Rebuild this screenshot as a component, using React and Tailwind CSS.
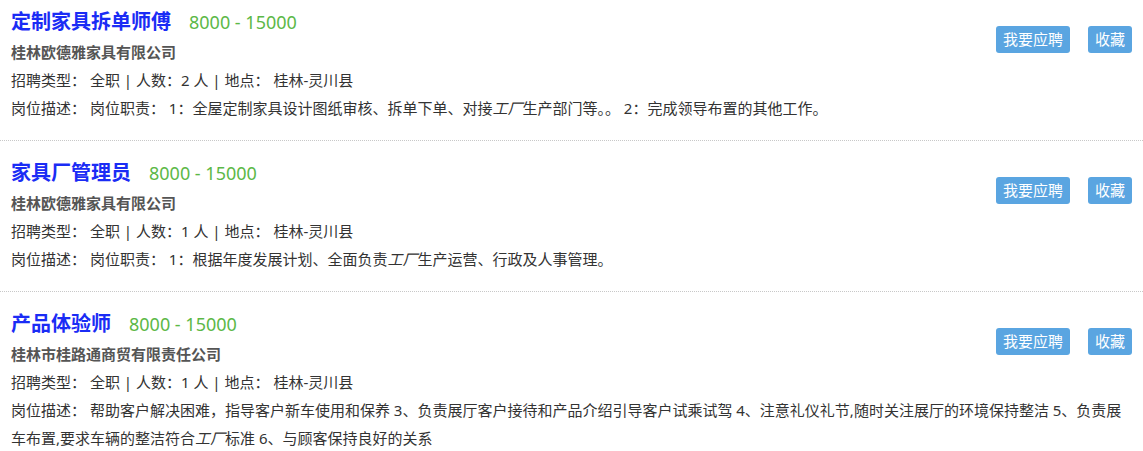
const jobs = [
  {
    title: '定制家具拆单师傅',
    salary: '8000 - 15000',
    company: '桂林欧德雅家具有限公司',
    type: '全职',
    count: 2,
    place: '桂林-灵川县',
    desc: ['岗位职责： 1：全屋定制家具设计图纸审核、拆单下单、对接', '生产部门等。。 2：完成领导布置的其他工作。'],
  },
  {
    title: '家具厂管理员',
    salary: '8000 - 15000',
    company: '桂林欧德雅家具有限公司',
    type: '全职',
    count: 1,
    place: '桂林-灵川县',
    desc: ['岗位职责： 1：根据年度发展计划、全面负责', '生产运营、行政及人事管理。'],
  },
  {
    title: '产品体验师',
    salary: '8000 - 15000',
    company: '桂林市桂路通商贸有限责任公司',
    type: '全职',
    count: 1,
    place: '桂林-灵川县',
    desc: [
      '帮助客户解决困难，指导客户新车使用和保养 3、负责展厅客户接待和产品介绍引导客户试乘试驾 4、注意礼仪礼节,随时关注展厅的环境保持整洁 5、负责展车布置,要求车辆的整洁符合',
      '标准 6、与顾客保持良好的关系',
    ],
  },
]

function JobItem({ job }) {
  return (
    <div className="px-[11px] pt-[16px] first:pt-[6px] pb-[18px] border-b border-dotted border-[#c8c8c8]">
      <div className="float-right mt-[20px] flex gap-[18px]">
        <button className="h-[27px] px-[7px] rounded-[3px] bg-[#5aa5e1] text-white text-[15px] leading-[27px]">
          我要应聘
        </button>
        <button className="h-[27px] px-[7px] rounded-[3px] bg-[#5aa5e1] text-white text-[15px] leading-[27px]">
          收藏
        </button>
      </div>
      <div className="h-[32px] flex items-center">
        <span className="text-[20px] font-bold text-[#1a2cf5]">{job.title}</span>
        <span className="ml-[18px] text-[18px] text-[#5cb847]">{job.salary}</span>
      </div>
      <div className="h-[28px] leading-[28px] text-[15px] font-bold text-[#555]">{job.company}</div>
      <div className="h-[28px] leading-[28px] text-[15px] text-[#333]">
        招聘类型： 全职 | 人数：{job.count} 人 | 地点： {job.place}
      </div>
      <div className="leading-[28px] text-[15px] text-[#333]">
        岗位描述： {job.desc[0]}
        <i>工厂</i>
        {job.desc[1]}
      </div>
    </div>
  )
}

export default function App() {
  return (
    <div
      className="w-[1143px] h-[451px] overflow-hidden bg-white"
      style={{ fontFamily: '"Noto Sans", "Noto Sans CJK SC", sans-serif' }}
    >
      {jobs.map((job) => (
        <JobItem key={job.title} job={job} />
      ))}
    </div>
  )
}
